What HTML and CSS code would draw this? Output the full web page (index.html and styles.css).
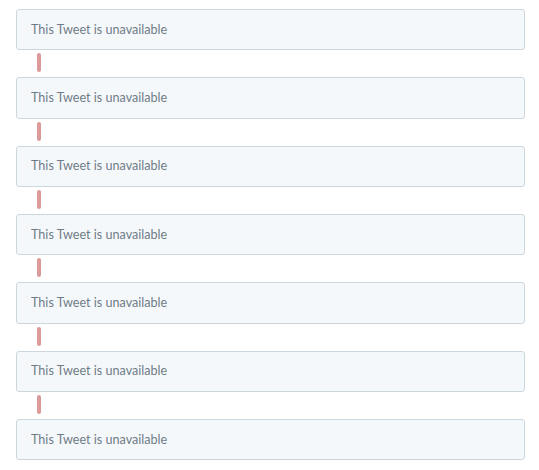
FILE: index.html
```html
<!DOCTYPE html>
<html>
<head>
<meta charset="utf-8">
<link rel="stylesheet" href="styles.css">
</head>
<body>
<div class="thread">
  <div class="tweet">This Tweet is unavailable</div>
  <div class="link"></div>
  <div class="tweet">This Tweet is unavailable</div>
  <div class="link"></div>
  <div class="tweet">This Tweet is unavailable</div>
  <div class="link"></div>
  <div class="tweet">This Tweet is unavailable</div>
  <div class="link"></div>
  <div class="tweet">This Tweet is unavailable</div>
  <div class="link"></div>
  <div class="tweet">This Tweet is unavailable</div>
  <div class="link"></div>
  <div class="tweet">This Tweet is unavailable</div>
</div>
</body>
</html>
```
FILE: styles.css
```css
html, body {
  margin: 0;
  padding: 0;
  background: #ffffff;
}
.thread {
  padding: 9px 14px 0 16px;
  display: flex;
  flex-direction: column;
}
.tweet {
  box-sizing: border-box;
  height: 41.33px;
  border: 1px solid #ccd6dd;
  border-radius: 3px;
  background: #f5f8fa;
  color: #6f7c88;
  font-family: "Lato", "Open Sans", sans-serif;
  font-size: 12.6px;
  padding: 0 14px 1px;
  display: flex;
  align-items: center;
}
.link {
  width: 4px;
  height: 19px;
  margin: 3px 0 5px 21px;
  border-radius: 2px;
  background: #dc9a9a;
}
```
